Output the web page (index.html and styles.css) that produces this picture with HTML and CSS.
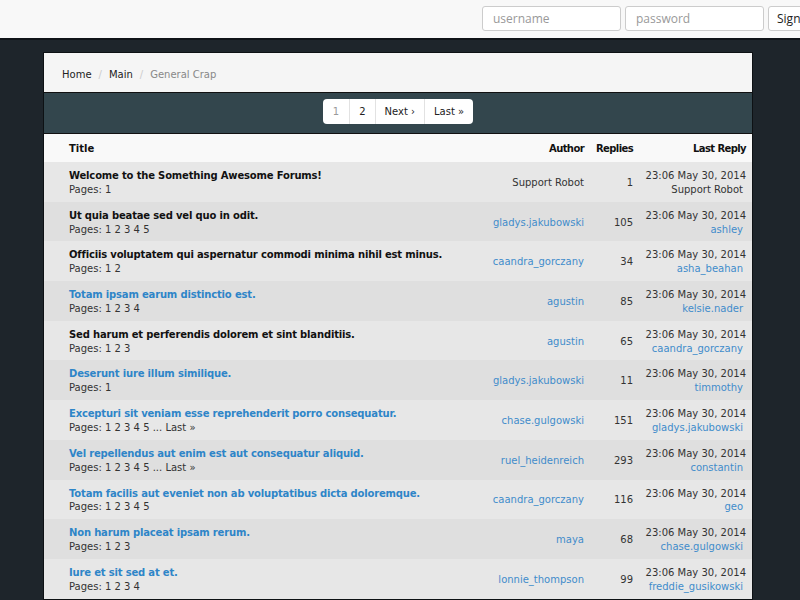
FILE: index.html
```html
<!DOCTYPE html>
<html>
<head>
<meta charset="utf-8">
<link rel="stylesheet" href="styles.css">
</head>
<body>
<header class="navbar">
  <div class="login">
    <input class="field" type="text" placeholder="username">
    <input class="field" type="password" placeholder="password">
    <button class="btn">Sign in</button>
  </div>
</header>
<main class="page">
  <div class="forum">
    <nav class="crumbs">
      <a href="#">Home</a><span class="sep">/</span><a href="#">Main</a><span class="sep">/</span><span class="current">General Crap</span>
    </nav>
    <div class="pagebar">
      <ul class="pager">
        <li class="active">1</li>
        <li>2</li>
        <li>Next ›</li>
        <li>Last »</li>
      </ul>
    </div>
    <table class="threads">
      <colgroup>
        <col class="c-title"><col class="c-author"><col class="c-replies"><col class="c-last">
      </colgroup>
      <thead>
        <tr><th class="t">Title</th><th class="r">Author</th><th class="r">Replies</th><th class="r">Last Reply</th></tr>
      </thead>
      <tbody>
        <tr><td class="t"><span class="title">Welcome to the Something Awesome Forums!</span><br>Pages: 1</td><td class="r">Support Robot</td><td class="r">1</td><td class="r">23:06 May 30, 2014<br><span class="nm">Support Robot</span></td></tr>
        <tr><td class="t"><span class="title">Ut quia beatae sed vel quo in odit.</span><br>Pages: 1 2 3 4 5</td><td class="r"><a href="#">gladys.jakubowski</a></td><td class="r">105</td><td class="r">23:06 May 30, 2014<br><a class="nm" href="#">ashley</a></td></tr>
        <tr><td class="t"><span class="title">Officiis voluptatem qui aspernatur commodi minima nihil est minus.</span><br>Pages: 1 2</td><td class="r"><a href="#">caandra_gorczany</a></td><td class="r">34</td><td class="r">23:06 May 30, 2014<br><a class="nm" href="#">asha_beahan</a></td></tr>
        <tr><td class="t"><a class="title" href="#">Totam ipsam earum distinctio est.</a><br>Pages: 1 2 3 4</td><td class="r"><a href="#">agustin</a></td><td class="r">85</td><td class="r">23:06 May 30, 2014<br><a class="nm" href="#">kelsie.nader</a></td></tr>
        <tr><td class="t"><span class="title">Sed harum et perferendis dolorem et sint blanditiis.</span><br>Pages: 1 2 3</td><td class="r"><a href="#">agustin</a></td><td class="r">65</td><td class="r">23:06 May 30, 2014<br><a class="nm" href="#">caandra_gorczany</a></td></tr>
        <tr><td class="t"><a class="title" href="#">Deserunt iure illum similique.</a><br>Pages: 1</td><td class="r"><a href="#">gladys.jakubowski</a></td><td class="r">11</td><td class="r">23:06 May 30, 2014<br><a class="nm" href="#">timmothy</a></td></tr>
        <tr><td class="t"><a class="title" href="#">Excepturi sit veniam esse reprehenderit porro consequatur.</a><br>Pages: 1 2 3 4 5 ... Last »</td><td class="r"><a href="#">chase.gulgowski</a></td><td class="r">151</td><td class="r">23:06 May 30, 2014<br><a class="nm" href="#">gladys.jakubowski</a></td></tr>
        <tr><td class="t"><a class="title" href="#">Vel repellendus aut enim est aut consequatur aliquid.</a><br>Pages: 1 2 3 4 5 ... Last »</td><td class="r"><a href="#">ruel_heidenreich</a></td><td class="r">293</td><td class="r">23:06 May 30, 2014<br><a class="nm" href="#">constantin</a></td></tr>
        <tr><td class="t"><a class="title" href="#">Totam facilis aut eveniet non ab voluptatibus dicta doloremque.</a><br>Pages: 1 2 3 4 5</td><td class="r"><a href="#">caandra_gorczany</a></td><td class="r">116</td><td class="r">23:06 May 30, 2014<br><a class="nm" href="#">geo</a></td></tr>
        <tr><td class="t"><a class="title" href="#">Non harum placeat ipsam rerum.</a><br>Pages: 1 2 3</td><td class="r"><a href="#">maya</a></td><td class="r">68</td><td class="r">23:06 May 30, 2014<br><a class="nm" href="#">chase.gulgowski</a></td></tr>
        <tr><td class="t"><a class="title" href="#">Iure et sit sed at et.</a><br>Pages: 1 2 3 4</td><td class="r"><a href="#">lonnie_thompson</a></td><td class="r">99</td><td class="r">23:06 May 30, 2014<br><a class="nm" href="#">freddie_gusikowski</a></td></tr>
      </tbody>
    </table>
  </div>
</main>
</body>
</html>
```
FILE: styles.css
```css
html, body {
  margin: 0;
  padding: 0;
}
body {
  background: #1e252b;
  font-family: "DejaVu Sans", Verdana, sans-serif;
  font-size: 10px;
  color: #222;
  overflow: hidden;
  height: 600px;
}
a { color: #3f8ccb; text-decoration: none; }

.navbar {
  height: 38px;
  background: #f8f8f8;
  border-bottom: 2px solid #101418;
  overflow: hidden;
  position: relative;
}
.login {
  display: flex;
  gap: 4px;
  padding: 6px 0 0 482px;
  width: 420px;
}
.field {
  box-sizing: border-box;
  width: 139px;
  height: 25px;
  border: 1px solid #ccc;
  border-radius: 3px;
  background: #fff;
  padding: 0 10px;
  font-family: "Open Sans", sans-serif;
  font-size: 12px;
  color: #555;
  flex: none;
}
.field::placeholder { color: #999; }
.btn {
  box-sizing: border-box;
  height: 25px;
  border: 1px solid #ccc;
  border-radius: 3px;
  background: #fff;
  padding: 0 8px;
  font-family: "Open Sans", sans-serif;
  font-size: 12px;
  color: #222;
  flex: none;
}

.page {
  padding: 12px 0 0 43px;
}
.forum {
  width: 708px;
  border: 1px solid #0d1114;
  background: #e6e6e6;
}
.crumbs {
  height: 39px;
  line-height: 43px;
  padding-left: 18px;
  background: #f5f5f5;
  border-bottom: 1px solid #111;
  font-size: 10px;
  overflow: hidden;
}
.crumbs a { color: #222; }
.crumbs .sep { color: #ccc; padding: 0 7px; }
.crumbs .current { color: #888; }

.pagebar {
  height: 40px;
  background: #33464d;
  border-bottom: 1px solid #111;
  display: flex;
  justify-content: center;
  align-items: flex-start;
}
.pager {
  list-style: none;
  margin: 6px 0 0 0;
  padding: 0;
  display: flex;
  background: #fff;
  border-radius: 4px;
  height: 25px;
}
.pager li {
  line-height: 25px;
  padding: 0 9px;
  border-left: 1px solid #e2e2e2;
  color: #222;
  font-size: 10px;
}
.pager li:first-child { border-left: none; padding: 0 10px 0 10px; }
.pager li.active { color: #999; }

.threads {
  width: 708px;
  border-collapse: collapse;
  table-layout: fixed;
}
.c-title { width: 416px; }
.c-author { width: 132px; }
.c-replies { width: 49px; }
.c-last { width: 111px; }
.threads th {
  height: 28px;
  padding: 0;
  background: #f9f9f9;
  font-weight: bold;
  font-size: 10px;
  color: #111;
  letter-spacing: -0.6px;
}
.threads th.t { letter-spacing: 0; }
.threads td {
  padding: 7px 0 5px 0;
  line-height: 13.85px;
  font-size: 10px;
  color: #333;
  white-space: nowrap;
}
.threads tbody tr:nth-child(odd) { background: #e7e7e7; }
.threads tbody tr:nth-child(even) { background: #dfdfdf; }
.threads .t { text-align: left; padding-left: 25px; }
.threads th.r, .threads td.r { text-align: right; padding-right: 8px; }
.threads th:last-child, .threads td:last-child { padding-right: 6px; }
.title { font-weight: bold; color: #111; letter-spacing: -0.17px; }
a.title { color: #2e85c8; }
.nm { margin-right: 3px; }
```
